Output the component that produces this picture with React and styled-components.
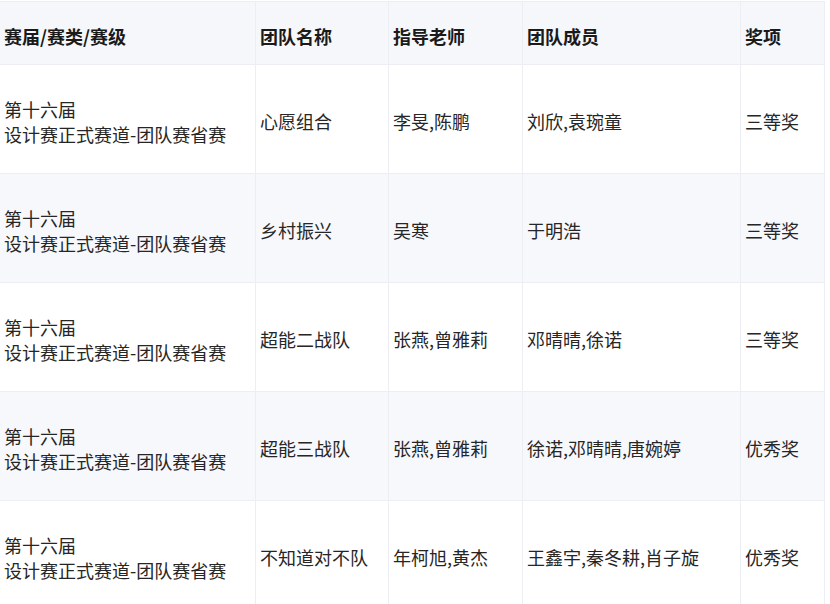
import React from 'react';
import styled, { createGlobalStyle } from "styled-components"

const rows = [
    { season: '第十六届', track: '设计赛正式赛道-团队赛省赛', team: '心愿组合', teachers: '李旻,陈鹏', members: '刘欣,袁琬童', award: '三等奖' },
    { season: '第十六届', track: '设计赛正式赛道-团队赛省赛', team: '乡村振兴', teachers: '吴寒', members: '于明浩', award: '三等奖' },
    { season: '第十六届', track: '设计赛正式赛道-团队赛省赛', team: '超能二战队', teachers: '张燕,曾雅莉', members: '邓晴晴,徐诺', award: '三等奖' },
    { season: '第十六届', track: '设计赛正式赛道-团队赛省赛', team: '超能三战队', teachers: '张燕,曾雅莉', members: '徐诺,邓晴晴,唐婉婷', award: '优秀奖' },
    { season: '第十六届', track: '设计赛正式赛道-团队赛省赛', team: '不知道对不队', teachers: '年柯旭,黄杰', members: '王鑫宇,秦冬耕,肖子旋', award: '优秀奖' },
]

const headers = ['赛届/赛类/赛级', '团队名称', '指导老师', '团队成员', '奖项']

const App = () => {
return (
    <>
        <GlobalStyle />
        <Page>
            <Table>
                {headers.map(h => (
                    <HeadCell key={h}>{h}</HeadCell>
                ))}
                {rows.map((r, i) => (
                    <React.Fragment key={i}>
                        <Cell $striped={i % 2 === 1}>
                            <Line>{r.season}</Line>
                            <Line>{r.track}</Line>
                        </Cell>
                        <Cell $striped={i % 2 === 1}>{r.team}</Cell>
                        <Cell $striped={i % 2 === 1}>{r.teachers}</Cell>
                        <Cell $striped={i % 2 === 1}>{r.members}</Cell>
                        <Cell $striped={i % 2 === 1}>{r.award}</Cell>
                    </React.Fragment>
                ))}
            </Table>
        </Page>
    </>
)
};

export default App;

const GlobalStyle = createGlobalStyle`
    html, body {
        margin: 0;
        padding: 0;
        background: #fff;
        overflow: hidden;
    }
    body {
        font-family: "Noto Sans CJK SC", "Noto Sans", sans-serif;
        color: #262626;
    }
`
const Page = styled.div`
    width: 830px;
    height: 604px;
    padding-top: 1px;
    box-sizing: border-box;
`
const Table = styled.div`
    display: grid;
    grid-template-columns: 256px 133px 134px 218px 84px;
    grid-template-rows: 63px repeat(5, 109px);
    width: 825px;
    border-top: 1px solid #eceef3;
`
const Cell = styled.div`
    box-sizing: border-box;
    display: flex;
    flex-direction: column;
    justify-content: center;
    padding: 5px 2px 0 4px;
    font-size: 18px;
    line-height: 25px;
    white-space: nowrap;
    background: ${p => p.$striped ? '#f7f8fc' : '#fff'};
    border-right: 1px solid #eceef3;
    border-bottom: 1px solid #eceef3;
`
const Line = styled.div`
    height: 25px;
`
const HeadCell = styled(Cell)`
    background: #f6f7fb;
    font-weight: 700;
    color: #1a1a1a;
    padding-top: 6px;
`
